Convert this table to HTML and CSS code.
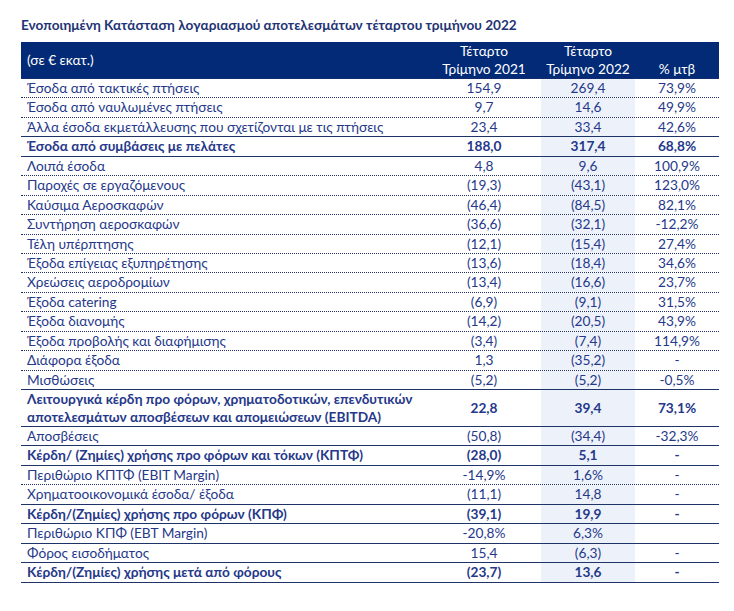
FILE: index.html
```html
<!DOCTYPE html>
<html lang="el">
<head>
<meta charset="utf-8">
<title>Ενοποιημένη Κατάσταση</title>
<link rel="stylesheet" href="styles.css">
</head>
<body>
<div class="wrap">
  <h1 class="title">Ενοποιημένη Κατάσταση λογαριασμού αποτελεσμάτων τέταρτου τριμήνου 2022</h1>
  <div class="tbl">
    <div class="row head">
      <div class="lbl">(σε € εκατ.)</div>
      <div class="c1">Τέταρτο<br>Τρίμηνο 2021</div>
      <div class="c2">Τέταρτο<br>Τρίμηνο 2022</div>
      <div class="c3">% μτβ</div>
    </div>
    <div class="row dot"><div class="lbl">Έσοδα από τακτικές πτήσεις</div><div class="c1">154,9</div><div class="c2">269,4</div><div class="c3">73,9%</div></div>
    <div class="row dot"><div class="lbl">Έσοδα από ναυλωμένες πτήσεις</div><div class="c1">9,7</div><div class="c2">14,6</div><div class="c3">49,9%</div></div>
    <div class="row solid"><div class="lbl">Άλλα έσοδα εκμετάλλευσης που σχετίζονται με τις πτήσεις</div><div class="c1">23,4</div><div class="c2">33,4</div><div class="c3">42,6%</div></div>
    <div class="row solid bold"><div class="lbl">Έσοδα από συμβάσεις με πελάτες</div><div class="c1">188,0</div><div class="c2">317,4</div><div class="c3">68,8%</div></div>
    <div class="row dot"><div class="lbl">Λοιπά έσοδα</div><div class="c1">4,8</div><div class="c2">9,6</div><div class="c3">100,9%</div></div>
    <div class="row dot"><div class="lbl">Παροχές σε εργαζόμενους</div><div class="c1">(19,3)</div><div class="c2">(43,1)</div><div class="c3">123,0%</div></div>
    <div class="row dot"><div class="lbl">Καύσιμα Αεροσκαφών</div><div class="c1">(46,4)</div><div class="c2">(84,5)</div><div class="c3">82,1%</div></div>
    <div class="row dot"><div class="lbl">Συντήρηση αεροσκαφών</div><div class="c1">(36,6)</div><div class="c2">(32,1)</div><div class="c3">-12,2%</div></div>
    <div class="row dot"><div class="lbl">Τέλη υπέρπτησης</div><div class="c1">(12,1)</div><div class="c2">(15,4)</div><div class="c3">27,4%</div></div>
    <div class="row dot"><div class="lbl">Έξοδα επίγειας εξυπηρέτησης</div><div class="c1">(13,6)</div><div class="c2">(18,4)</div><div class="c3">34,6%</div></div>
    <div class="row dot"><div class="lbl">Χρεώσεις αεροδρομίων</div><div class="c1">(13,4)</div><div class="c2">(16,6)</div><div class="c3">23,7%</div></div>
    <div class="row dot"><div class="lbl">Έξοδα catering</div><div class="c1">(6,9)</div><div class="c2">(9,1)</div><div class="c3">31,5%</div></div>
    <div class="row dot"><div class="lbl">Έξοδα διανομής</div><div class="c1">(14,2)</div><div class="c2">(20,5)</div><div class="c3">43,9%</div></div>
    <div class="row dot"><div class="lbl">Έξοδα προβολής και διαφήμισης</div><div class="c1">(3,4)</div><div class="c2">(7,4)</div><div class="c3">114,9%</div></div>
    <div class="row dot"><div class="lbl">Διάφορα έξοδα</div><div class="c1">1,3</div><div class="c2">(35,2)</div><div class="c3">-</div></div>
    <div class="row solid"><div class="lbl">Μισθώσεις</div><div class="c1">(5,2)</div><div class="c2">(5,2)</div><div class="c3">-0,5%</div></div>
    <div class="row solid bold tall"><div class="lbl">Λειτουργικά κέρδη προ φόρων, χρηματοδοτικών, επενδυτικών αποτελεσμάτων αποσβέσεων και απομειώσεων (EBITDA)</div><div class="c1">22,8</div><div class="c2">39,4</div><div class="c3">73,1%</div></div>
    <div class="row solid"><div class="lbl">Αποσβέσεις</div><div class="c1">(50,8)</div><div class="c2">(34,4)</div><div class="c3">-32,3%</div></div>
    <div class="row solid bold"><div class="lbl">Κέρδη/ (Ζημίες) χρήσης προ φόρων και τόκων (ΚΠΤΦ)</div><div class="c1">(28,0)</div><div class="c2">5,1</div><div class="c3">-</div></div>
    <div class="row dot"><div class="lbl">Περιθώριο ΚΠΤΦ (EBIT Margin)</div><div class="c1">-14,9%</div><div class="c2">1,6%</div><div class="c3">-</div></div>
    <div class="row solid"><div class="lbl">Χρηματοοικονομικά έσοδα/ έξοδα</div><div class="c1">(11,1)</div><div class="c2">14,8</div><div class="c3">-</div></div>
    <div class="row solid bold"><div class="lbl">Κέρδη/(Ζημίες) χρήσης προ φόρων (ΚΠΦ)</div><div class="c1">(39,1)</div><div class="c2">19,9</div><div class="c3">-</div></div>
    <div class="row solid"><div class="lbl">Περιθώριο ΚΠΦ (EBT Margin)</div><div class="c1">-20,8%</div><div class="c2">6,3%</div><div class="c3"></div></div>
    <div class="row solid"><div class="lbl">Φόρος εισοδήματος</div><div class="c1">15,4</div><div class="c2">(6,3)</div><div class="c3">-</div></div>
    <div class="row solid bold"><div class="lbl">Κέρδη/(Ζημίες) χρήσης μετά από φόρους</div><div class="c1">(23,7)</div><div class="c2">13,6</div><div class="c3">-</div></div>
  </div>
</div>
</body>
</html>
```

FILE: styles.css
```css
* { box-sizing: border-box; }
html, body { margin: 0; padding: 0; background: #ffffff; }
body {
  font-family: Lato, "Open Sans", sans-serif;
  font-size: 13.7px;
  color: #25388a;
}
.wrap { padding: 15px 15px 0 21px; width: 734px; }
.title {
  margin: 0 0 7px 0;
  font-size: 13.6px;
  font-weight: 700;
  color: #1f3475;
  line-height: 20px;
  height: 20px;
}
.tbl { width: 698px; }
.row {
  display: grid;
  grid-template-columns: 406px 114px 94px 84px;
  height: 19.45px;
  line-height: 18px;
}
.row > div { white-space: nowrap; }
.lbl { padding-left: 6px; }
.c1, .c2, .c3 { text-align: center; }
.c2 { background: #edf1f9; }
.dot { border-bottom: 1px dotted #1f2f66; }
.solid { border-bottom: 1px solid #1f3466; }
.bold { font-weight: 700; }
.tall { height: 37px; }
.tall > div { display: flex; align-items: center; justify-content: center; line-height: 18px; }
.tall > .lbl { justify-content: flex-start; white-space: normal; }
.head {
  height: 37px;
  background: #022a76;
  color: #ffffff;
  border-bottom: 1px dotted #1f2f66;
  line-height: 18px;
}
.head > div { display: flex; align-items: flex-end; justify-content: center; }
.head > .lbl { justify-content: flex-start; align-items: center; }
.head > .c2 { background: transparent; }
```
